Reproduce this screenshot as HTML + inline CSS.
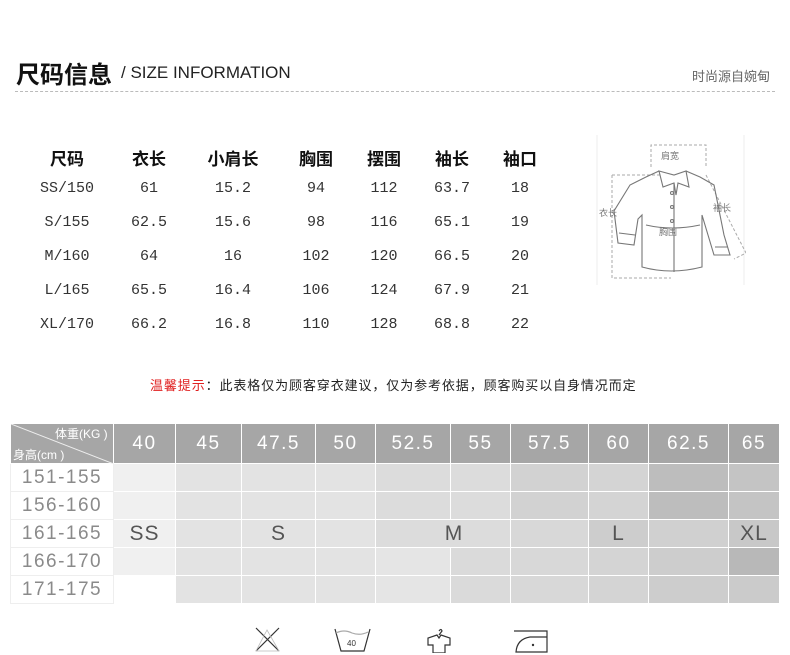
<!DOCTYPE html>
<html><head><meta charset="utf-8"><style>
*{margin:0;padding:0;box-sizing:border-box}
body{width:790px;height:655px;background:#fff;position:relative;overflow:hidden;font-family:"Liberation Sans","Noto Sans CJK SC",sans-serif;color:#222}
.a{position:absolute;white-space:nowrap}
.t td{text-align:center}
.grid{position:absolute;left:10px;top:423px;border-collapse:collapse;border:1px solid #c8c8c8}
.grid td{border:1px solid #fff;padding:0;text-align:center;font-size:21px;color:#555;height:28px;letter-spacing:1px}
.grid tr.h td{background:#a6a6a6;color:#fff;height:40px;font-size:19px;letter-spacing:1.5px}
.grid td.l{color:#8a8a8a;background:#fff;font-size:19px;letter-spacing:1.5px;border-color:#eee}
</style></head><body>
<div class="a" style="left:16px;top:55px;font-size:24px;font-weight:bold;color:#111">尺码信息</div>
<div class="a" style="left:121px;top:63px;font-size:17px;color:#222">/ SIZE INFORMATION</div>
<div class="a" style="left:692px;top:66px;font-size:13px;color:#666">时尚源自婉甸</div>
<div class="a" style="left:15px;top:91px;width:760px;border-top:1px dashed #bbb"></div>

<div class="a" style="left:20px;top:143px">
<table class="t" style="border-collapse:collapse">
<tr style="height:28px;font-weight:bold;font-size:17px;color:#111"><td style="width:94px">尺码</td><td style="width:70px">衣长</td><td style="width:98px">小肩长</td><td style="width:68px">胸围</td><td style="width:68px">摆围</td><td style="width:68px">袖长</td><td style="width:68px">袖口</td></tr>
</table>
<table class="t" style="border-collapse:collapse;font-family:'Liberation Mono','Noto Serif CJK SC',monospace;font-size:15px;color:#333">
<tr style="height:34px"><td style="width:94px">SS/150</td><td style="width:70px">61</td><td style="width:98px">15.2</td><td style="width:68px">94</td><td style="width:68px">112</td><td style="width:68px">63.7</td><td style="width:68px">18</td></tr>
<tr style="height:34px"><td>S/155</td><td>62.5</td><td>15.6</td><td>98</td><td>116</td><td>65.1</td><td>19</td></tr>
<tr style="height:34px"><td>M/160</td><td>64</td><td>16</td><td>102</td><td>120</td><td>66.5</td><td>20</td></tr>
<tr style="height:34px"><td>L/165</td><td>65.5</td><td>16.4</td><td>106</td><td>124</td><td>67.9</td><td>21</td></tr>
<tr style="height:34px"><td>XL/170</td><td>66.2</td><td>16.8</td><td>110</td><td>128</td><td>68.8</td><td>22</td></tr>
</table></div>

<svg class="a" style="left:596px;top:135px" width="150" height="150" viewBox="0 0 150 150">
<path d="M1 0V150M148 0V150" stroke="#eee" fill="none"/>
<g fill="none" stroke="#aaa" stroke-width="1" stroke-dasharray="3,2"><path d="M55 32V10H110V32M16 40H66M16 40V143H75M110 40L150 118L138 124"/></g>
<g fill="none" stroke="#777" stroke-width="1.1">
<path d="M63 36L50 42L34 50L18 76L22 108L38 110L42 84L46 80V132Q75 140 106 132V80L118 120H134L128 100L118 50L104 42L90 36"/>
<path d="M63 36L67 52L78 48L80 60L82 48L93 52L90 36L78 40Z"/>
<path d="M78 48V137"/><circle cx="76" cy="58" r="1.5"/><circle cx="76" cy="72" r="1.5"/><circle cx="76" cy="86" r="1.5"/>
<path d="M50 90Q76 96 104 90"/><path d="M23 98L39 100M119 112L132 112"/>
</g>
<g font-size="9" fill="#777" font-family="Noto Sans CJK SC,sans-serif"><text x="65" y="24">肩宽</text><text x="3" y="81">衣长</text><text x="117" y="76">袖长</text><text x="63" y="100">胸围</text></g>
</svg>

<div class="a" style="left:150px;top:375px;font-size:13px;letter-spacing:0.9px;color:#222"><span style="color:#e02020">温馨提示</span>：此表格仅为顾客穿衣建议，仅为参考依据，顾客购买以自身情况而定</div>

<table class="grid">
<tr class="h"><td style="width:103px;position:relative;letter-spacing:0"><svg class="a" style="left:0;top:0" width="103" height="40"><line x1="0" y1="0" x2="103" y2="40" stroke="#eee"/><text x="44" y="14" font-size="12" fill="#fff">体重(KG )</text><text x="2" y="35" font-size="12" fill="#fff">身高(cm )</text></svg></td>
<td style="width:62px">40</td><td style="width:66px">45</td><td style="width:74px">47.5</td><td style="width:60px">50</td><td style="width:75px">52.5</td><td style="width:60px">55</td><td style="width:78px">57.5</td><td style="width:60px">60</td><td style="width:80px">62.5</td><td style="width:51px">65</td></tr>
<tr><td class="l">151-155</td><td style="background:#f0f0f0"></td><td style="background:#e3e3e3"></td><td style="background:#e3e3e3"></td><td style="background:#e3e3e3"></td><td style="background:#dcdcdc"></td><td style="background:#dcdcdc"></td><td style="background:#d2d2d2"></td><td style="background:#d4d4d4"></td><td style="background:#bdbdbd"></td><td style="background:#c4c4c4"></td></tr>
<tr><td class="l">156-160</td><td style="background:#f0f0f0"></td><td style="background:#e3e3e3"></td><td style="background:#e3e3e3"></td><td style="background:#e3e3e3"></td><td style="background:#dcdcdc"></td><td style="background:#dcdcdc"></td><td style="background:#d2d2d2"></td><td style="background:#d4d4d4"></td><td style="background:#bdbdbd"></td><td style="background:#c4c4c4"></td></tr>
<tr><td class="l">161-165</td><td style="background:#f0f0f0">SS</td><td style="background:#e3e3e3"></td><td style="background:#e3e3e3">S</td><td style="background:#e3e3e3"></td><td colspan="2" style="background:#dcdcdc;padding-left:22px">M</td><td style="background:#d8d8d8"></td><td style="background:#cdcdcd">L</td><td style="background:#d0d0d0"></td><td style="background:#c8c8c8">XL</td></tr>
<tr><td class="l">166-170</td><td style="background:#f0f0f0"></td><td style="background:#e3e3e3"></td><td style="background:#e3e3e3"></td><td style="background:#e3e3e3"></td><td style="background:#e5e5e5"></td><td style="background:#dadada"></td><td style="background:#d8d8d8"></td><td style="background:#d4d4d4"></td><td style="background:#cdcdcd"></td><td style="background:#b8b8b8"></td></tr>
<tr><td class="l">171-175</td><td style="background:#fff"></td><td style="background:#e3e3e3"></td><td style="background:#e3e3e3"></td><td style="background:#e3e3e3"></td><td style="background:#e5e5e5"></td><td style="background:#dadada"></td><td style="background:#d8d8d8"></td><td style="background:#d4d4d4"></td><td style="background:#cdcdcd"></td><td style="background:#cbcbcb"></td></tr>
</table>

<svg class="a" style="left:250px;top:625px" width="300" height="28">
<g fill="none" stroke="#333" stroke-width="1.2">
<path d="M6 3L29 26M29 3L6 26"/><path d="M17 5L6 26H29Z" stroke="#bbb" stroke-width="0.8"/>
<path d="M85 4L91 26H114L120 4"/><path d="M86 8Q94 4 102 8Q110 11 118 7" stroke="#aaa"/>
<path d="M187 10L178 13V20H183V28H195V20H200V13L191 10L189 13Z"/><path d="M189 6Q191 3 192 6L189 10"/>
<path d="M264 6H297V27H266Q267 14 280 12H297"/>
</g>
<text x="97" y="21" font-size="8" fill="#333">40</text><circle cx="283" cy="20" r="1.2" fill="#333"/>
</svg>
</body></html>
